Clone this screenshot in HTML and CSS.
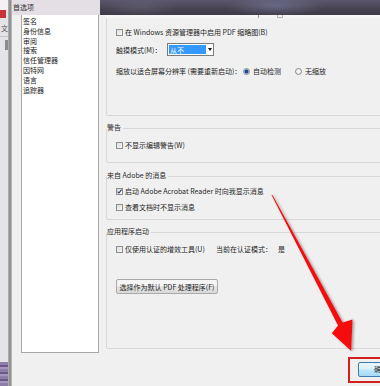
FILE: index.html
```html
<!DOCTYPE html>
<html lang="zh-CN">
<head>
<meta charset="utf-8">
<title>首选项</title>
<link rel="stylesheet" href="styles.css">
</head>
<body>
<div class="screen">
  <div class="bgapp">
    <div class="bg-top"></div>
    <div class="bg-red"></div>
    <div class="bg-gap"></div>
    <div class="bg-char">文</div>
    <div class="bg-line"></div>
    <div class="bg-block"></div>
    <div class="bg-fill"></div>
    <div class="bg-purple"></div>
  </div>
  <div class="edge"></div>
  <div class="dialog">
    <div class="titlebar">
      <div class="title-left">首选项</div>
      <div class="title-dark"></div>
    </div>
    <div class="main">
      <div class="list">
        <div class="item">签名</div>
        <div class="item">身份信息</div>
        <div class="item">审阅</div>
        <div class="item">搜索</div>
        <div class="item">信任管理器</div>
        <div class="item">因特网</div>
        <div class="item">语言</div>
        <div class="item">追踪器</div>
      </div>
      <div class="panel">
        <div class="group g1">
          <div class="remnant"><span class="mark-line"></span><span class="mark-box"></span></div>
          <div class="row r1"><span class="cb"></span><span>在 Windows 资源管理器中启用 PDF 缩略图(B)</span></div>
          <div class="row r2"><span class="lbl-touch">触摸模式(M)：</span><div class="select"><span class="sel-val">从不</span><span class="sel-btn"><span class="tri"></span></span></div></div>
          <div class="row r3"><span class="lbl-scale">缩放以适合屏幕分辨率 (需要重新启动)：</span><span class="radio on"></span><span class="rlabel">自动检测</span><span class="radio"></span><span class="rlabel2">无缩放</span></div>
        </div>
        <div class="group g2">
          <div class="legend">警告</div>
          <div class="row g2r1"><span class="cb"></span><span>不显示编辑警告(W)</span></div>
        </div>
        <div class="group g3">
          <div class="legend">来自 Adobe 的消息</div>
          <div class="row g3r1"><span class="cb checked"><svg viewBox="0 0 5 5" width="5" height="5"><path d="M0.5 2.6 L1.9 4 L4.6 0.6" fill="none" stroke="#2a3a66" stroke-width="1.1"/></svg></span><span>启动 Adobe Acrobat Reader 时向我显示消息</span></div>
          <div class="row g3r2"><span class="cb"></span><span>查看文档时不显示消息</span></div>
        </div>
        <div class="group g4">
          <div class="legend">应用程序启动</div>
          <div class="row g4r1"><span class="cb"></span><span class="lbl-plugin">仅使用认证的增效工具(U)</span><span class="lbl-mode">当前在认证模式：</span><span>是</span></div>
          <div class="btn">选择作为默认 PDF 处理程序(F)</div>
        </div>
        <div class="footer">
          <div class="okbtn">确定</div>
        </div>
      </div>
    </div>
  </div>
</div>
<svg class="arrow" width="380" height="386" viewBox="0 0 380 386">
  <defs>
    <filter id="sh" x="-20%" y="-20%" width="140%" height="140%">
      <feDropShadow dx="1.6" dy="0.6" stdDeviation="1" flood-color="#555" flood-opacity="0.55"/>
    </filter>
  </defs>
  <polygon points="271.4,194.8 272.8,195.4 342.6,322.6 352.5,319.5 351.2,351 331.8,333.2 338,325.4" fill="#f50c0c" filter="url(#sh)"/>
</svg>
<div class="highlight"></div>
</body>
</html>
```

FILE: styles.css
```css
* { box-sizing: border-box; margin: 0; padding: 0; }
html, body { width: 380px; height: 386px; overflow: hidden; }
body {
  background: #f0f0f0;
  font-family: "Noto Sans CJK SC", "Microsoft YaHei", sans-serif;
  font-size: 7px;
  color: #262626;
  position: relative;
}
.screen { display: flex; width: 380px; height: 386px; }

.bgapp { width: 8px; flex: none; display: flex; flex-direction: column; background: #e4e4e8; overflow: hidden; }
.bg-top { height: 10px; background: #f3f1f3; }
.bg-red { height: 8px; width: 6px; background: #c8323a; }
.bg-gap { height: 6px; }
.bg-char { height: 9px; font-size: 7px; line-height: 9px; margin-left: 1px; color: #555; }
.bg-line { height: 1px; background: #c4c4c4; margin-top: 3px; }
.bg-block { height: 10px; width: 3px; margin-left: 5px; margin-top: 3px; background: #8a8a8a; }
.bg-fill { flex: 1; }
.bg-purple { height: 24px; background: repeating-linear-gradient(#8e7cab 0 3px, #6a5888 3px 5px, #a696c2 5px 7px); }

.edge { width: 4px; flex: none; background: linear-gradient(90deg, #b4b4b4, #8c8c8c 45%, #959595 75%, #d6d6d6); }

.dialog { flex: 1; display: flex; flex-direction: column; min-width: 0; }
.titlebar { height: 15px; display: flex; flex: none; }
.title-left { width: 88px; background: #e3dfe4; padding-left: 1px; line-height: 14px; color: #333; }
.title-dark {
  flex: 1;
  background:
    radial-gradient(ellipse 50px 10px at 175px 6px, rgba(125, 128, 165, 0.55), transparent),
    radial-gradient(ellipse 40px 9px at 40px 7px, rgba(110, 108, 130, 0.45), transparent),
    linear-gradient(#5c576e, #45414f 60%, #3e3a48);
}

.main { display: flex; flex: 1; padding-left: 9px; }
.list {
  width: 78px; height: 338px; flex: none;
  background: #fff;
  border: 1px solid #a8a8a8; border-top: none;
  padding: 2px 0 0 1px;
}
.item { line-height: 9.8px; white-space: nowrap; color: #222; }

.panel { margin-left: 7px; width: 300px; flex: none; display: flex; flex-direction: column; }

.group { border: 1px solid #d8d8d8; border-radius: 2px; padding-left: 9px; }
.g1 { border-top: none; border-radius: 0 0 2px 2px; padding-bottom: 37px; }
.g2 { margin-top: 12px; padding-bottom: 10px; }
.g3 { margin-top: 13px; padding-bottom: 5px; }
.g4 { margin-top: 12px; padding-bottom: 54px; }

.legend {
  display: table;
  margin: -6px 0 0 -9px;
  height: 9px; line-height: 9px;
  background: #f0f0f0;
  padding-right: 2px;
  color: #2a2a2a;
}

.remnant { height: 3px; margin-left: -10px; background: #f6f6f6; display: flex; }
.mark-line { width: 1px; height: 3px; background: #9a9a9a; margin-left: 152px; }
.mark-box { width: 6px; height: 3px; border: 1px solid #b8b8b8; border-top: none; margin-left: 18px; }

.row { display: flex; align-items: center; height: 14px; white-space: nowrap; }
.r1 { margin-top: 7px; }
.r2 { margin-top: 4px; height: 13px; }
.r3 { margin-top: 8px; }
.g2r1 { margin-top: 6px; }
.g3r1 { margin-top: 4px; }
.g3r2 { margin-top: 2px; }
.g4r1 { margin-top: 6px; }

.cb {
  width: 7px; height: 7px; flex: none;
  border: 1px solid #8e8f8f;
  background: linear-gradient(135deg, #dcdcdc, #f8f8f8);
  margin-right: 2px;
  display: flex; align-items: center; justify-content: center;
}
.cb svg { display: block; }

.lbl-touch { width: 51px; }
.select { display: flex; width: 47px; height: 13px; border: 1px solid #7a7a7a; background: #fff; }
.sel-val { width: 37px; margin: 1px 0 1px 1px; background: #3399ff; color: #fff; padding-left: 1px; line-height: 10px; }
.sel-btn { flex: 1; display: flex; align-items: center; justify-content: center; }
.tri { width: 0; height: 0; border-left: 2.5px solid transparent; border-right: 2.5px solid transparent; border-top: 3px solid #111; }

.lbl-scale { width: 127px; }
.radio {
  width: 7px; height: 7px; flex: none; border-radius: 50%;
  border: 1px solid #8c8c8c;
  background: radial-gradient(circle, #ffffff, #dcdcdc);
  margin-right: 3px;
}
.radio.on { background: radial-gradient(circle, #1c4a8e 0 1.5px, #6d9ad2 2px, #e6e6e6 2.6px); }
.rlabel { width: 42px; }

.lbl-plugin { width: 91px; }
.lbl-mode { width: 62px; }

.btn {
  margin-top: 23px;
  width: 102px; height: 15px;
  border: 1px solid #a9a9a9; border-radius: 2px;
  background: linear-gradient(#f5f5f5 0 45%, #e4e4e4 50%, #d9d9d9);
  display: flex; align-items: center; justify-content: center;
  white-space: nowrap;
}

.footer { margin-top: 13px; padding-left: 252px; display: flex; }
.okbtn {
  width: 72px; height: 15px;
  border: 1px solid #3d7bad; border-radius: 2px;
  background: linear-gradient(#eaf6fd, #d9f0fc 48%, #bee6fd 52%, #a7d9f5);
  padding-left: 15px; line-height: 13px; white-space: nowrap;
}

.arrow { position: absolute; left: 0; top: 0; pointer-events: none; }
.highlight { position: absolute; left: 348px; top: 357px; width: 40px; height: 26px; border: 2px solid #d41f1f; }
```
